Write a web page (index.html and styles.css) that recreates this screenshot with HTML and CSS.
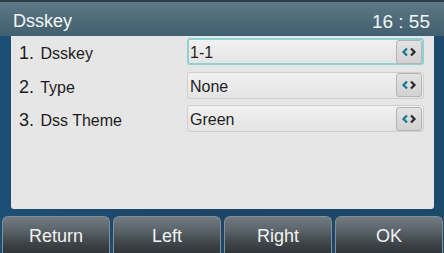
FILE: index.html
```html
<!DOCTYPE html>
<html lang="en">
<head>
  <meta charset="UTF-8" />
  <title>Dsskey</title>
  <link rel="stylesheet" href="styles.css">
</head>
<body>

<div class="screen">
  <header class="titlebar">
    <span class="title">Dsskey</span>
    <span class="clock">16 : 55</span>
  </header>

  <div class="panel">
    <div class="row">
      <div class="label"><span class="num">1.</span> Dsskey</div>
      <div class="field active">
        <span class="value">1-1</span>
        <span class="switch">
          <svg width="16" height="10" viewBox="0 0 16 10"><path d="M6 1.5 L2.5 5 L6 8.5" fill="none" stroke="#167792" stroke-width="2.2"/><path d="M10 1.5 L13.5 5 L10 8.5" fill="none" stroke="#2a2a2a" stroke-width="2.2"/></svg>
        </span>
      </div>
    </div>
    <div class="row">
      <div class="label"><span class="num">2.</span> Type</div>
      <div class="field">
        <span class="value">None</span>
        <span class="switch">
          <svg width="16" height="10" viewBox="0 0 16 10"><path d="M6 1.5 L2.5 5 L6 8.5" fill="none" stroke="#167792" stroke-width="2.2"/><path d="M10 1.5 L13.5 5 L10 8.5" fill="none" stroke="#2a2a2a" stroke-width="2.2"/></svg>
        </span>
      </div>
    </div>
    <div class="row">
      <div class="label"><span class="num">3.</span> Dss Theme</div>
      <div class="field">
        <span class="value">Green</span>
        <span class="switch">
          <svg width="16" height="10" viewBox="0 0 16 10"><path d="M6 1.5 L2.5 5 L6 8.5" fill="none" stroke="#167792" stroke-width="2.2"/><path d="M10 1.5 L13.5 5 L10 8.5" fill="none" stroke="#2a2a2a" stroke-width="2.2"/></svg>
        </span>
      </div>
    </div>
  </div>

  <footer class="softkeys">
    <div class="key">Return</div>
    <div class="key">Left</div>
    <div class="key">Right</div>
    <div class="key">OK</div>
  </footer>
</div>

</body>
</html>
```

FILE: styles.css
```css
* {
  box-sizing: border-box;
}

html, body {
  margin: 0;
  padding: 0;
}

body {
  font-family: 'Liberation Sans', Arial, sans-serif;
  background: #1d4a6b;
}

.screen {
  width: 444px;
  height: 253px;
  display: flex;
  flex-direction: column;
  background: linear-gradient(90deg, #1c4f74 0%, #1e4466 50%, #1b4a6d 100%);
  overflow: hidden;
}

.titlebar {
  height: 36px;
  flex: none;
  display: flex;
  align-items: center;
  justify-content: space-between;
  padding: 5px 14px 0 13px;
  border-top: 2px solid #2c3b44;
  background: linear-gradient(180deg, #5d7886 0%, #4e6a78 55%, #41606f 100%);
  color: #f4f7f8;
  font-size: 18px;
}

.clock {
  font-size: 19px;
}

.panel {
  flex: none;
  height: 173px;
  margin: 0 10px 0 11px;
  padding: 2px 10px 0 8px;
  background: #e6e6e6;
  border-radius: 0 0 3px 3px;
  display: flex;
  flex-direction: column;
  gap: 6.5px;
}

.row {
  display: flex;
  align-items: center;
  height: 27px;
}

.label {
  width: 168px;
  flex: none;
  font-size: 16px;
  color: #1c1c1c;
  padding-top: 4px;
}

.num {
  font-size: 18px;
  margin-right: 2px;
}

.field {
  flex: 1;
  height: 27px;
  display: flex;
  align-items: center;
  justify-content: space-between;
  padding: 0 1px 0 2px;
  border: 1px solid #cfcfcf;
  border-radius: 3px;
  background: linear-gradient(180deg, #f1f1f1 0%, #e4e4e4 100%);
}

.field.active {
  border: 2px solid #8dd3d4;
  padding: 0 0 0 1px;
}

.value {
  font-size: 16px;
  color: #1e1e1e;
  padding-top: 3px;
}

.switch {
  width: 26px;
  height: 24px;
  display: flex;
  align-items: center;
  justify-content: center;
  border: 1px solid #b4b4b4;
  border-radius: 3px;
  background: linear-gradient(180deg, #e2e2e2 0%, #d2d2d2 100%);
}

.softkeys {
  margin-top: auto;
  height: 37px;
  display: flex;
  gap: 3px;
  padding: 0 1px 0 2px;
}

.key {
  flex: 1;
  display: flex;
  align-items: center;
  justify-content: center;
  color: #f2f2f2;
  font-size: 18px;
  padding-top: 3px;
  border: 1px solid #7d909b;
  border-bottom: none;
  border-radius: 6px 6px 0 0;
  background: linear-gradient(180deg, #727b81 0%, #5c656b 35%, #3d4347 75%, #2f3437 100%);
}
```
